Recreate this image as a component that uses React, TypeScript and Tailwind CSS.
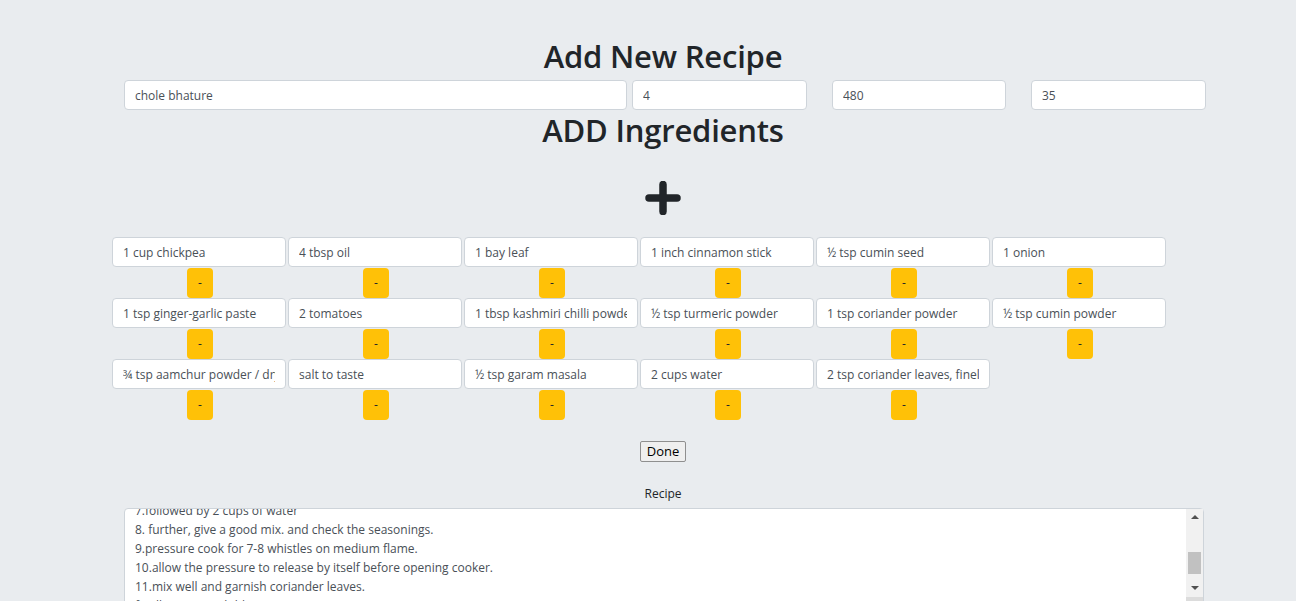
import React, { useLayoutEffect, useRef } from "react";

const ingredients = [
  "1 cup chickpea",
  "4 tbsp oil",
  "1 bay leaf",
  "1 inch cinnamon stick",
  "½ tsp cumin seed",
  "1 onion",
  "1 tsp ginger-garlic paste",
  "2 tomatoes",
  "1 tbsp kashmiri chilli powder",
  "½ tsp turmeric powder",
  "1 tsp coriander powder",
  "½ tsp cumin powder",
  "¾ tsp aamchur powder / dry mango powder",
  "salt to taste",
  "½ tsp garam masala",
  "2 cups water",
  "2 tsp coriander leaves, finely chopped",
];

const recipeText = [
  "1.firstly, soak 1 cup chickpea overnight in enough water.",
  "2.in a pressure cooker heat 4 tbsp oil and saute bay leaf, cinnamon stick and cumin seeds.",
  "3.add in 1 onion and saute well till golden brown.",
  "4.now add 1 tsp ginger-garlic paste and saute till raw aroma disappears.",
  "5.add 2 tomatoes and saute till they turn soft and mushy.",
  "6.keeping the flame on low, add all the spice powders and salt. saute well.",
  "7.followed by 2 cups of water",
  "8. further, give a good mix. and check the seasonings.",
  "9.pressure cook for 7-8 whistles on medium flame.",
  "10.allow the pressure to release by itself before opening cooker.",
  "11.mix well and garnish coriander leaves.",
  "finally, serve with bhature.",
  "12.for bhature, knead a soft dough with maida, curd, salt and oil.",
  "13.rest the dough for 2 hours.",
  "14.roll and deep fry in hot oil till puffed up.",
  "15.serve hot with chole.",
].join("\n");

const FONT = { fontFamily: '"Open Sans", "Noto Sans", "Liberation Sans", sans-serif' };

const inputCls =
  "h-[30px] rounded-[4px] border border-[#ced4da] bg-white px-[10px] text-[12px] text-[#495057] outline-none";

export default function App() {
  const taRef = useRef<HTMLTextAreaElement>(null);
  useLayoutEffect(() => {
    if (taRef.current) taRef.current.scrollTop = 128;
  }, []);

  return (
    <div className="min-h-screen overflow-hidden bg-[#e9ecef] text-[#212529]" style={FONT}>
      <h2 className="pl-[30px] pt-[37px] text-center text-[31px] font-semibold leading-[38px] tracking-[-0.2px]">
        Add New Recipe
      </h2>
      <div className="mt-[5px] flex">
        <input defaultValue="chole bhature" className={`ml-[124px] w-[503px] ${inputCls}`} />
        <input defaultValue="4" className={`ml-[5px] w-[175px] ${inputCls}`} />
        <input defaultValue="480" className={`ml-[25px] w-[174px] ${inputCls}`} />
        <input defaultValue="35" className={`ml-[25px] w-[175px] ${inputCls}`} />
      </div>
      <h2 className="mt-[1px] pl-[30px] text-center text-[31px] font-semibold leading-[38px] tracking-[-0.2px]">
        ADD Ingredients
      </h2>
      <div className="mt-[32px] flex justify-center pl-[30px]">
        <svg width="36" height="34" viewBox="0 0 36 34">
          <path d="M18 3.5 V30.5 M4 17 H32" stroke="#212529" strokeWidth="7.5" strokeLinecap="round" fill="none" />
        </svg>
      </div>
      <div className="ml-[112px] mt-[22px] grid w-[1054px] grid-cols-[repeat(6,174px)] gap-x-[2px]">
        {ingredients.map((ing, i) => (
          <div key={i} className="flex flex-col items-center">
            <input defaultValue={ing} className={`w-[174px] ${inputCls}`} />
            <button className="ml-[2px] mt-[1px] h-[30px] w-[26px] rounded-[4px] bg-[#ffc107] text-[12px] leading-none text-[#212529]">
              -
            </button>
          </div>
        ))}
      </div>
      <div className="mt-[21px] flex justify-center pl-[30px]">
        <button className="h-[21px] rounded-[2px] border border-[#8f8f8f] bg-[#efefef] px-[6px] text-[13px] leading-none text-black">
          Done
        </button>
      </div>
      <div className="mt-[24px] pl-[30px] text-center text-[12px] leading-[16px]">Recipe</div>
      <div className="mt-[6px] flex">
        <div className="relative ml-[124px] h-[107px] w-[1080px] rounded-[4px] border border-[#ced4da] bg-white">
          <textarea
            ref={taRef}
            readOnly
            defaultValue={recipeText}
            className="block h-full w-full resize-none overflow-hidden bg-transparent pb-[5px] pl-[10px] pr-[28px] pt-[6px] text-[12px] leading-[19px] text-[#495057] outline-none"
          />
          <div className="absolute right-0 top-0 flex h-[88px] w-[17px] flex-col items-center bg-[#f1f1f1]">
            <div className="mt-[6px] h-0 w-0 border-x-[4px] border-b-[4px] border-x-transparent border-b-[#505050]" />
            <div className="mt-[33px] h-[22px] w-[13px] bg-[#c1c1c1]" />
            <div className="mt-[12px] h-0 w-0 border-x-[4px] border-t-[4px] border-x-transparent border-t-[#505050]" />
          </div>
          <div className="absolute right-0 top-[88px] h-[17px] w-[17px] bg-[#dcdcdc]" />
        </div>
      </div>
    </div>
  );
}
